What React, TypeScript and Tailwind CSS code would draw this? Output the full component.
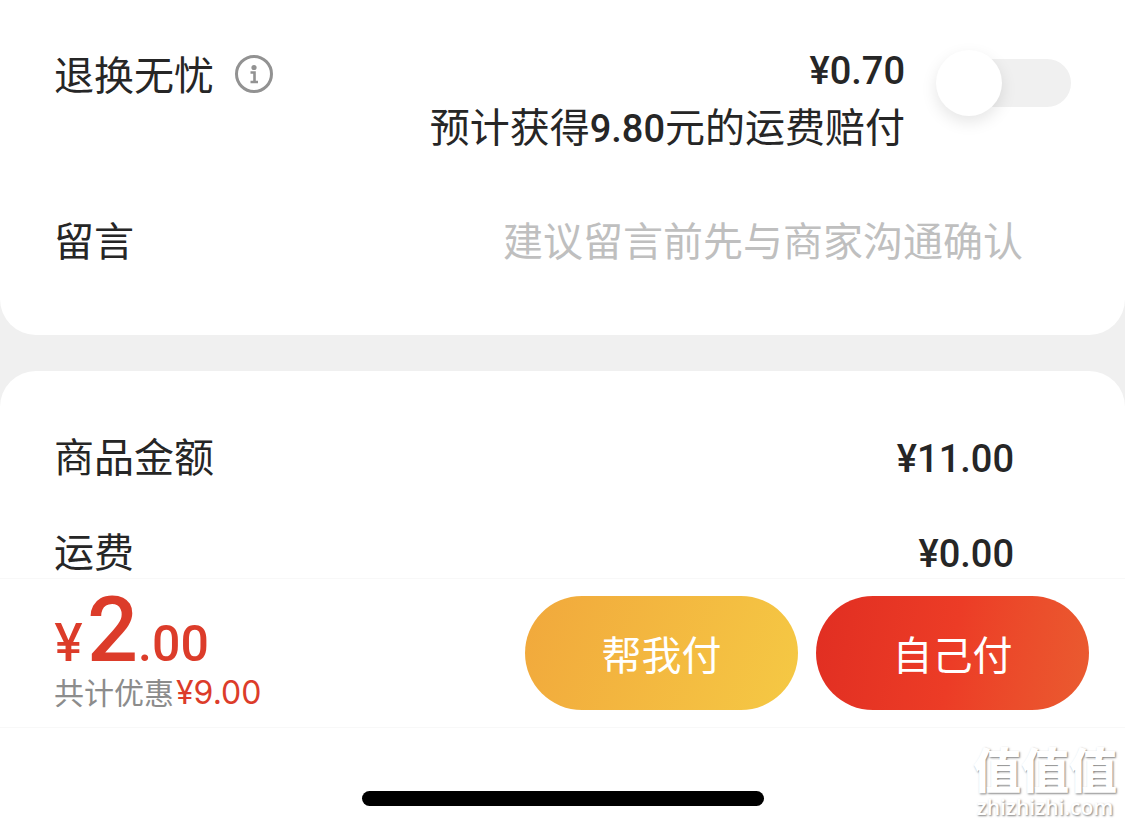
import React from 'react';

const cjk = 'font-["Noto_Sans_CJK_SC",sans-serif]';
const num = 'font-["Roboto",sans-serif] font-medium text-[38px]';

const amounts = [
  { label: '商品金额', value: '¥11.00' },
  { label: '运费', value: '¥0.00' },
];

const InfoIcon: React.FC = () => (
  <svg className="h-10 w-10" viewBox="0 0 40 40" fill="none" aria-hidden="true">
    <circle cx="20" cy="20" r="17.5" stroke="#929292" strokeWidth="3" />
    <circle cx="20" cy="13.5" r="2.6" fill="#929292" />
    <path d="M16.5 18.5H20.5V28M16.5 28H24" stroke="#929292" strokeWidth="2.6" />
  </svg>
);

const OrderOptions: React.FC = () => (
  <section className="rounded-b-[36px] bg-white pt-11 pb-16 pl-[54px]">
    <div className="flex items-start pr-[54px]">
      <label htmlFor="return-cover" className="leading-[58px]">退换无忧</label>
      <button type="button" aria-label="说明" className="mt-[10px] ml-5">
        <InfoIcon />
      </button>
      <div className="ml-auto text-right leading-[54px]">
        <div className={num}>¥0.70</div>
        <div>
          预计获得<span className={num}>9.80</span>元的运费赔付
        </div>
      </div>
      <input
        id="return-cover"
        type="checkbox"
        role="switch"
        className="relative mt-[15px] ml-9 h-12 w-[130px] appearance-none rounded-full bg-[#f0f0f0] before:absolute before:-top-[9px] before:-left-[5px] before:h-[66px] before:w-[66px] before:rounded-full before:bg-white before:shadow-[0_6px_16px_rgba(0,0,0,0.1)] checked:bg-[#e93b25] checked:before:left-[69px]"
      />
    </div>
    <div className="mt-[51px] flex items-center pr-[102px]">
      <label htmlFor="message" className="shrink-0 leading-[64px]">留言</label>
      <input
        id="message"
        type="text"
        placeholder="建议留言前先与商家沟通确认"
        className="h-16 min-w-0 flex-1 text-right outline-none placeholder:text-[#bfbfbf]"
      />
    </div>
  </section>
);

const Amounts: React.FC = () => (
  <section className="mt-9 rounded-t-[36px] bg-white pt-14 pl-[54px] pr-[111px]">
    <dl className="flex flex-col gap-[31px]">
      {amounts.map(item => (
        <div key={item.label} className="flex items-start justify-between">
          <dt className="leading-[56px]">{item.label}</dt>
          <dd className={`${num} leading-[64px]`}>{item.value}</dd>
        </div>
      ))}
    </dl>
  </section>
);

const PayBar: React.FC = () => (
  <div className="-mt-2 flex items-start justify-between border-y border-[#f8f8f8] bg-white pt-[17px] pr-9 pb-[9px] pl-[54px]">
    <div>
      <div className='font-["Roboto",sans-serif] text-[50px] leading-10 font-medium text-[#dc3c2a]'>
        <span className='mr-1 font-["Inter",sans-serif] text-[52px]'>¥</span>
        <span className="text-[90px] leading-[70px]">2</span>.00
      </div>
      <div className="text-[30px] leading-[50px] text-[#8c8c8c]">
        共计优惠<span className='ml-0.5 font-["Inter",sans-serif] text-[32px] text-[#dc3c2a]'>¥9.00</span>
      </div>
    </div>
    <div className="flex gap-[18px] text-white">
      <button type="button" className="h-[114px] w-[273px] rounded-full bg-linear-110 from-[#f1a83c] to-[#f5c944]">
        帮我付
      </button>
      <button type="button" className="h-[114px] w-[273px] rounded-full bg-linear-100 from-[#e12e22] via-[#ec3c26] to-[#ea5b30]">
        自己付
      </button>
    </div>
  </div>
);

const Watermark: React.FC = () => (
  <div className="absolute right-2 bottom-1.5 text-center text-white [text-shadow:1px_1px_2px_rgba(0,0,0,0.5)]">
    <div className="text-[48px] leading-[56px] font-black">值值值</div>
    <div className='font-["Open_Sans",sans-serif] text-[21px] leading-6 font-semibold'>zhizhizhi.com</div>
  </div>
);

export default function App() {
  return (
    <main className={`${cjk} min-h-screen bg-[#f0f0f0] text-[40px] text-[#262626]`}>
      <OrderOptions />
      <Amounts />
      <PayBar />
      <footer className="relative h-[97px] bg-white pt-[63px]">
        <div className="mx-auto h-[15px] w-[402px] rounded-full bg-black" />
        <Watermark />
      </footer>
    </main>
  );
}
